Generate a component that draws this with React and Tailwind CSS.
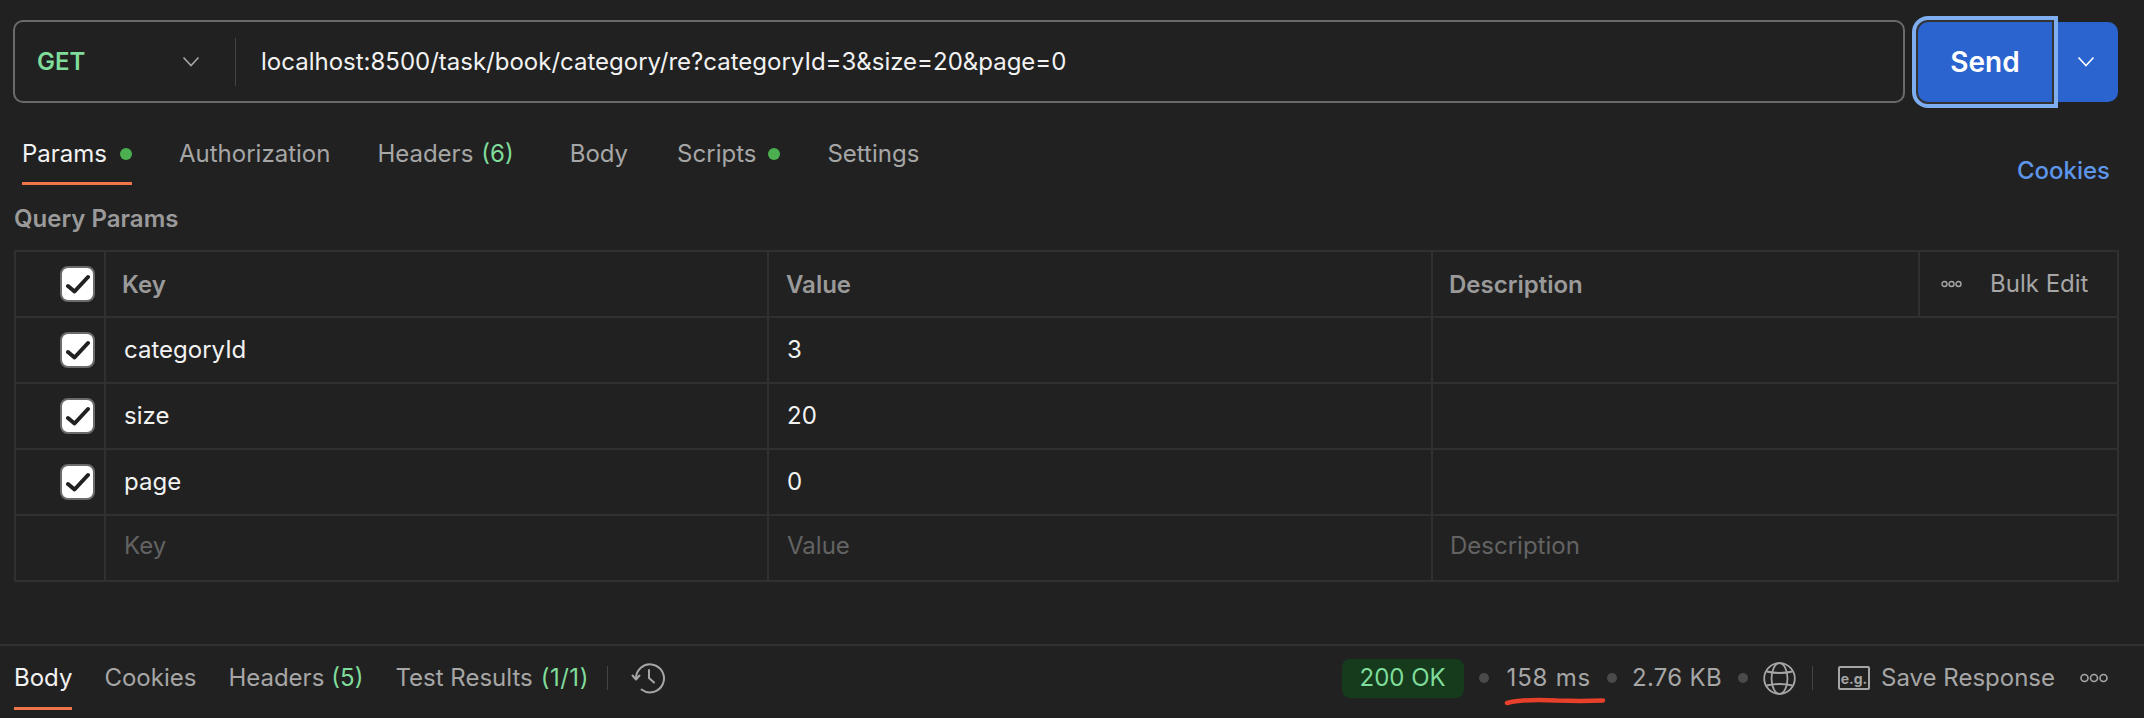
import React from "react";

const Chevron = ({ className }) => (
  <svg className={className} width="18" height="12" viewBox="0 0 18 12" fill="none" stroke="currentColor" strokeWidth="1.6">
    <path d="M1.5 1.5 9 9.5l7.5-8" />
  </svg>
);

const Check = () => (
  <div className="w-[35px] h-[36px] rounded-[8px] bg-white border-2 border-[#6b6b6b] flex items-center justify-center">
    <svg width="24" height="20" viewBox="0 0 24 20" fill="none" stroke="#212121" strokeWidth="4" strokeLinecap="round" strokeLinejoin="round">
      <path d="M2 12l6.500 5.500L22 3" />
    </svg>
  </div>
);

const Dot = () => <span className="w-[12px] h-[12px] rounded-full bg-[#4caf50]" />;
const Sep = () => <span className="block w-[10px] h-[10px] rounded-full bg-[#4a4a4a]" />;

const Row = ({ k, v }) => (
  <div className="grid grid-cols-[90px_663px_664px_1fr] h-[66px] border-b-2 border-[#303030] text-[#f2f2f2] text-[24px]">
    <div className="flex items-center justify-end pr-[9px] border-r-2 border-[#303030]"><Check /></div>
    <div className="flex items-center pl-[18px] border-r-2 border-[#303030]">{k}</div>
    <div className="flex items-center pl-[18px] border-r-2 border-[#303030]">{v}</div>
    <div />
  </div>
);

export default function App() {
  return (
    <div className="relative w-[2144px] h-[718px] overflow-hidden bg-[#212121] text-[#a6a6a6] text-[24px] font-['Inter',sans-serif] flex flex-col">
      {/* URL bar */}
      <div className="flex items-center pl-[13px] pr-[26px] h-[83px] mt-[20px]">
        <div className="flex-1 h-[83px] rounded-[10px] border-2 border-[#6a6a6a] flex items-center">
          <span className="ml-[22px] w-[145px] text-[#7fdc9a] font-semibold">GET</span>
          <Chevron className="text-[#a6a6a6]" />
          <span className="w-px h-[48px] bg-[#444] ml-[35px]" />
          <span className="ml-[25px] text-[#f2f2f2]">localhost:8500/task/book/category/re?categoryId=3&amp;size=20&amp;page=0</span>
        </div>
        <div className="ml-[13px] relative z-10 w-[134px] h-[80px] rounded-l-[10px] bg-[#2b64cf] shadow-[0_0_0_2px_#333,0_0_0_6px_#7eaef0] flex items-center justify-center text-white text-[28px] font-semibold">
          Send
        </div>
        <div className="w-[66px] h-[80px] rounded-r-[10px] bg-[#2b64cf] flex items-center justify-center text-white pl-[2px]">
          <Chevron />
        </div>
      </div>

      {/* Tabs */}
      <div className="relative flex h-[82px] pl-[22px] pr-[34px] items-start">
        <div className="h-[82px] flex items-center gap-[13px] text-[#f2f2f2] border-b-[3px] border-[#f0764a] pt-[22px] w-[110px] mr-[47px] box-border">
          Params <Dot />
        </div>
        <div className="h-[82px] flex items-center mr-[47px] pt-[19px]">Authorization</div>
        <div className="h-[82px] flex items-center mr-[56px] pt-[19px] gap-[8px]">Headers <span className="text-[#7fdc9a]">(6)</span></div>
        <div className="h-[82px] flex items-center mr-[49px] pt-[19px]">Body</div>
        <div className="h-[82px] flex items-center mr-[47px] pt-[19px] gap-[12px]">Scripts <Dot /></div>
        <div className="h-[82px] flex items-center pt-[19px]">Settings</div>
        <div className="ml-auto h-[82px] flex items-center pt-[53px] text-[#5d96ea] font-medium">Cookies</div>
      </div>

      <div className="pl-[14px] h-[65px] pt-[16px] font-semibold text-[#9a9a9a] text-[24px]">Query Params</div>

      {/* Table */}
      <div className="ml-[14px] mr-[25px] border-2 border-b-0 border-[#303030]">
        <div className="grid grid-cols-[90px_663px_664px_487px_1fr] h-[66px] border-b-2 border-[#303030] font-semibold text-[#9a9a9a] text-[24px]">
          <div className="flex items-center justify-end pr-[9px] border-r-2 border-[#303030]"><Check /></div>
          <div className="flex items-center pl-[16px] pt-[2px] border-r-2 border-[#303030]">Key</div>
          <div className="flex items-center pl-[17px] pt-[2px] border-r-2 border-[#303030]">Value</div>
          <div className="flex items-center pl-[16px] pt-[2px] border-r-2 border-[#303030]">Description</div>
          <div className="flex items-center pl-[21px] gap-[28px] font-normal text-[#a6a6a6]">
            <svg width="21" height="8" viewBox="0 0 21 8" fill="none" stroke="#a6a6a6" strokeWidth="1.4">
              <circle cx="3.500" cy="4" r="2.500" /><circle cx="10.500" cy="4" r="2.500" /><circle cx="17.500" cy="4" r="2.500" />
            </svg>
            Bulk Edit
          </div>
        </div>
        <Row k="categoryId" v="3" />
        <Row k="size" v="20" />
        <Row k="page" v="0" />
        <div className="grid grid-cols-[90px_663px_664px_1fr] h-[66px] border-b-2 border-[#303030] text-[#636363]">
          <div className="border-r-2 border-[#303030]" />
          <div className="flex items-center pl-[18px] pb-[5px] border-r-2 border-[#303030]">Key</div>
          <div className="flex items-center pl-[18px] pb-[5px] border-r-2 border-[#303030]">Value</div>
          <div className="flex items-center pl-[17px] pb-[5px]">Description</div>
        </div>
      </div>

      {/* Response bar */}
      <div className="mt-[62px] border-t-2 border-[#303030] h-[74px] pb-[8px] flex items-center pl-[14px] pr-[36px]">
        <div className="relative h-full flex items-center text-[#f2f2f2] mr-[32px]">
          Body
          <span className="absolute left-0 right-0 bottom-0 h-[3px] bg-[#f0764a]" />
        </div>
        <span className="mr-[32px]">Cookies</span>
        <span className="mr-[32px] flex gap-[7px]">Headers <span className="text-[#7fdc9a]">(5)</span></span>
        <span className="flex gap-[8px]">Test Results <span className="text-[#7fdc9a] tracking-[0.5px]">(1/1)</span></span>
        <span className="w-px h-[24px] bg-[#444] ml-[18px] mr-[23px]" />
        <svg width="36" height="36" viewBox="0 0 36 36" fill="none" stroke="#a6a6a6" strokeWidth="2" strokeLinecap="round" strokeLinejoin="round">
          <path d="M10.500 29.500A14 14 0 1 0 5 18.500" />
          <path d="M1.500 15.500 5 19.500l3.500-4" />
          <path d="M18 10v8l5 4.500" />
        </svg>

        <div className="ml-auto flex items-center">
          <span className="h-[39px] w-[122px] rounded-[8px] bg-[#153a1c] text-[#7fdc9a] flex items-center justify-center">200 OK</span>
          <span className="ml-[15px] mr-[18px]"><Sep /></span>
          <span className="tracking-[0.8px]">158 ms</span>
          <span className="ml-[16px] mr-[15px]"><Sep /></span>
          <span className="tracking-[0.3px]">2.76 KB</span>
          <span className="ml-[16px] mr-[15px]"><Sep /></span>
          <svg width="33" height="33" viewBox="0 0 33 33" fill="none" stroke="#a6a6a6" strokeWidth="1.800">
            <circle cx="16.500" cy="16.500" r="15.300" />
            <ellipse cx="16.500" cy="16.500" rx="8" ry="15.300" />
            <path d="M3.500 9.500Q16.500 12.500 29.500 9.500M3.500 23.500Q16.500 20.500 29.500 23.500" />
          </svg>
          <span className="w-px h-[24px] bg-[#444] mx-[16px]" />
          <span className="w-[32px] h-[24px] border-2 border-[#a6a6a6] rounded-[2px] text-[14px] font-bold flex items-center justify-center ml-[9px] mr-[11px]">e.g.</span>
          <span>Save Response</span>
          <svg className="ml-[25px]" width="28" height="10" viewBox="0 0 28 10" fill="none" stroke="#a6a6a6" strokeWidth="1.600">
            <circle cx="4.500" cy="5" r="3.500" /><circle cx="14" cy="5" r="3.500" /><circle cx="23.500" cy="5" r="3.500" />
          </svg>
        </div>
      </div>

      {/* hand-drawn underline */}
      <svg className="absolute left-[1500px] top-[694px]" width="110" height="14" viewBox="0 0 110 14" fill="none">
        <path d="M7 9c15-4 32-3.500 50-2.500 15 .5 32 .5 46 0" stroke="#e8402a" strokeWidth="4.500" strokeLinecap="round" />
      </svg>
    </div>
  );
}
